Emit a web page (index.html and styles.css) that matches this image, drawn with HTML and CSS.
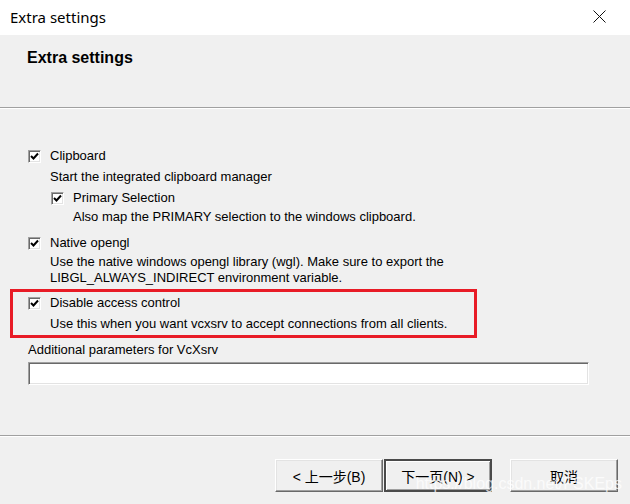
FILE: index.html
```html
<!DOCTYPE html>
<html lang="en">
<head>
    <meta charset="UTF-8">
    <title>Extra settings</title>
    <link rel="stylesheet" href="styles.css">
</head>
<body>
    <div class="window">
        <div class="titlebar">
            <span class="title">Extra settings</span>
            <svg class="close" width="13" height="13" viewBox="0 0 13 13">
                <path d="M0.5 0.5 L12.5 12.5 M12.5 0.5 L0.5 12.5" stroke="#111" stroke-width="1" fill="none"/>
            </svg>
        </div>
        <div class="header">
            <h1>Extra settings</h1>
        </div>
        <div class="content">
            <div class="option">
                <label class="check"><span class="box"><svg width="11" height="11" viewBox="0 0 11 11"><path d="M2 5 L4.5 7.5 L9 2.5" stroke="#000" stroke-width="2" fill="none"/></svg></span>Clipboard</label>
                <p class="desc">Start the integrated clipboard manager</p>
                <div class="option sub">
                    <label class="check"><span class="box"><svg width="11" height="11" viewBox="0 0 11 11"><path d="M2 5 L4.5 7.5 L9 2.5" stroke="#000" stroke-width="2" fill="none"/></svg></span>Primary Selection</label>
                    <p class="desc tight">Also map the PRIMARY selection to the windows clipboard.</p>
                </div>
            </div>
            <div class="option gap">
                <label class="check"><span class="box"><svg width="11" height="11" viewBox="0 0 11 11"><path d="M2 5 L4.5 7.5 L9 2.5" stroke="#000" stroke-width="2" fill="none"/></svg></span>Native opengl</label>
                <p class="desc tight">Use the native windows opengl library (wgl). Make sure to export the<br>LIBGL_ALWAYS_INDIRECT environment variable.</p>
            </div>
            <div class="option marked">
                <label class="check"><span class="box"><svg width="11" height="11" viewBox="0 0 11 11"><path d="M2 5 L4.5 7.5 L9 2.5" stroke="#000" stroke-width="2" fill="none"/></svg></span>Disable access control</label>
                <p class="desc">Use this when you want vcxsrv to accept connections from all clients.</p>
            </div>
            <div class="params">
                <span>Additional parameters for VcXsrv</span>
                <input type="text" class="field">
            </div>
        </div>
        <div class="footer">
            <div class="pair">
                <button class="btn">&lt; 上一步(B)</button>
                <button class="btn default">下一页(N) &gt;</button>
            </div>
            <button class="btn">取消</button>
            <span class="watermark">https://blog.csdn.net/FSKEps</span>
        </div>
    </div>
</body>
</html>
```

FILE: styles.css
```css
body {
    margin: 0;
    padding: 0;
    font-family: 'Liberation Sans', Arial, sans-serif;
    font-size: 13px;
    color: #000;
    background-color: #f0f0f0;
}
.window {
    width: 630px;
    height: 504px;
    display: flex;
    flex-direction: column;
    overflow: hidden;
}
.titlebar {
    height: 35px;
    background-color: #fff;
    display: flex;
    align-items: center;
    justify-content: space-between;
    padding: 0 24px 2px 10px;
    box-sizing: border-box;
    flex-shrink: 0;
}
.title {
    font-family: 'Noto Sans', sans-serif;
    font-size: 15px;
    color: #000;
}
.header {
    height: 73px;
    box-sizing: border-box;
    border-bottom: 1px solid #a0a0a0;
    padding: 14px 27px 0;
    flex-shrink: 0;
}
.header h1 {
    margin: 0;
    font-size: 16px;
    font-weight: bold;
    line-height: 18px;
    color: #000;
}
.content {
    flex: 1;
    border-top: 1px solid #fff;
    padding: 39px 0 0 28px;
}
.option.gap {
    margin-top: 10px;
}
.option.sub {
    margin: 5px 0 0 23px;
}
.check {
    display: flex;
    align-items: center;
    height: 16px;
    line-height: 16px;
}
.box {
    width: 13px;
    height: 13px;
    box-sizing: border-box;
    background-color: #fff;
    border: 1px solid;
    border-color: #a0a0a0 #fff #fff #a0a0a0;
    box-shadow: inset 1px 1px #696969, inset -1px -1px #e3e3e3;
    margin-right: 9px;
    display: flex;
    align-items: center;
    justify-content: center;
}
.box svg {
    display: block;
}
.desc {
    margin: 5px 0 0 22px;
    line-height: 16px;
}
.desc.tight {
    margin-top: 3px;
}
.marked {
    width: 467px;
    box-sizing: border-box;
    margin: 3px 0 0 -18px;
    border: 3px solid #e81b26;
    padding: 3px 0 3px 15px;
}
.params {
    margin-top: 4px;
    display: flex;
    flex-direction: column;
}
.params span {
    line-height: 16px;
}
.field {
    width: 561px;
    height: 23px;
    box-sizing: border-box;
    margin: 4px 0 0;
    border: 1px solid;
    border-color: #a0a0a0 #fff #fff #a0a0a0;
    box-shadow: inset 1px 1px #696969, inset -1px -1px #e3e3e3;
    background-color: #fff;
}
.footer {
    position: relative;
    height: 69px;
    box-sizing: border-box;
    flex-shrink: 0;
    border-top: 1px solid #a0a0a0;
    box-shadow: inset 0 1px #fff;
    padding: 23px 12px 0 0;
    display: flex;
    justify-content: flex-end;
    align-items: flex-start;
    gap: 18px;
}
.pair {
    display: flex;
    gap: 1px;
}
.btn {
    width: 108px;
    height: 33px;
    box-sizing: border-box;
    font-family: 'Liberation Sans', 'Noto Sans CJK SC', sans-serif;
    font-size: 14px;
    color: #000;
    background-color: #f0f0f0;
    border: 1px solid;
    border-color: #fff #696969 #696969 #fff;
    box-shadow: inset -1px -1px #a0a0a0, inset 1px 1px #e3e3e3;
    padding: 0;
}
.btn.default {
    border: 2px solid #4a4a4a;
    box-shadow: inset 1px 1px #fff, inset -1px -1px #a0a0a0;
}
.watermark {
    position: absolute;
    right: 8px;
    bottom: 11px;
    font-family: 'Liberation Sans', sans-serif;
    font-size: 16px;
    color: rgba(255, 255, 255, 0.75);
    pointer-events: none;
}
```
